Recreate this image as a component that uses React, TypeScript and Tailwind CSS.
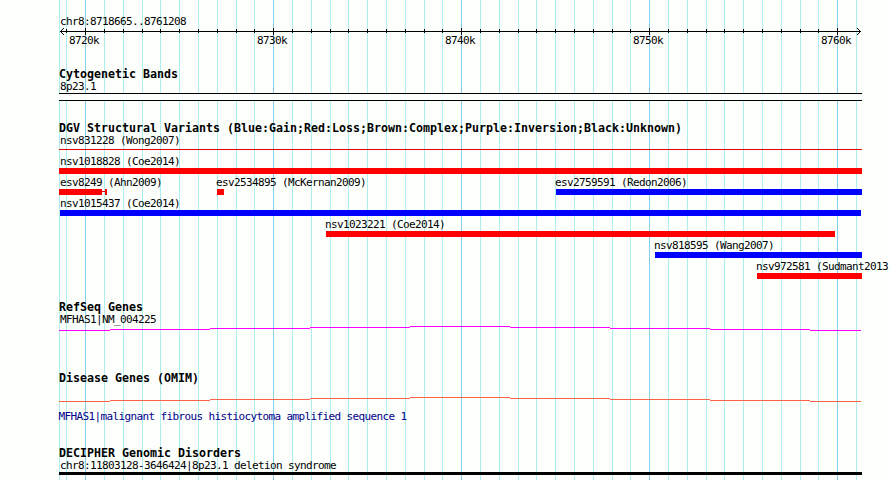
import clsx from "clsx";

const ORIGIN = 59;
const WIDTH = 803;

const MAJOR = [
	{ x: 85, label: "8720k" },
	{ x: 273, label: "8730k" },
	{ x: 461, label: "8740k" },
	{ x: 649, label: "8750k" },
	{ x: 837, label: "8760k" },
];
// 1k steps between two major lines, rounded to whole pixels
const STEPS = [19, 38, 57, 75, 94, 113, 132, 151, 169];
const MINOR = [
	66,
	...MAJOR.flatMap((m) => STEPS.map((s) => m.x + s)).filter((x) => x < 862),
];

type Feature = {
	name: string;
	label: number;
	start: number;
	end: number;
	color: string;
	thin?: boolean;
	tail?: boolean;
};

const VARIANTS: Feature[][] = [
	[{ name: "nsv831228 (Wong2007)", label: 60, start: 59, end: 862, color: "bg-[#e60000]", thin: true }],
	[{ name: "nsv1018828 (Coe2014)", label: 60, start: 59, end: 862, color: "bg-[#ff0000]" }],
	[
		{ name: "esv8249 (Ahn2009)", label: 60, start: 59, end: 102, color: "bg-[#ff0000]", tail: true },
		{ name: "esv2534895 (McKernan2009)", label: 216, start: 217, end: 224, color: "bg-[#ff0000]" },
		{ name: "esv2759591 (Redon2006)", label: 555, start: 556, end: 862, color: "bg-[#0000ff]" },
	],
	[{ name: "nsv1015437 (Coe2014)", label: 60, start: 60, end: 861, color: "bg-[#0000ff]" }],
	[{ name: "nsv1023221 (Coe2014)", label: 325, start: 326, end: 835, color: "bg-[#ff0000]" }],
	[{ name: "nsv818595 (Wang2007)", label: 654, start: 655, end: 862, color: "bg-[#0000ff]" }],
	[{ name: "nsv972581 (Sudmant2013", label: 756, start: 757, end: 862, color: "bg-[#ff0000]" }],
];

function Title({ children }: { children: string }) {
	return (
		<h2 className="h-3 text-[11.63px] leading-3 font-bold whitespace-pre">
			{children}
		</h2>
	);
}

function Label({ children, className }: { children: string; className?: string }) {
	return (
		<div
			className={clsx(
				"h-3 text-[11px] leading-[14px] tracking-[-0.622px] whitespace-pre",
				className,
			)}
		>
			{children}
		</div>
	);
}

function GridLines() {
	return (
		<svg
			className="absolute inset-0"
			width="890"
			height="480"
			shapeRendering="crispEdges"
		>
			{[ORIGIN, ...MINOR].map((x) => (
				<rect key={x} x={x} y="0" width="1" height="480" fill="#afeeee" />
			))}
			{MAJOR.map((m) => (
				<rect key={m.x} x={m.x} y="0" width="1" height="480" fill="#87ceeb" />
			))}
		</svg>
	);
}

function Ruler() {
	return (
		<div>
			<svg
				className="mt-px block"
				width={WIDTH}
				height="7"
				viewBox={`${ORIGIN} 0 ${WIDTH} 7`}
				shapeRendering="crispEdges"
			>
				<rect x="60" y="3" width="801" height="1" />
				{MINOR.filter((x) => x < 856).map((x) => (
					<rect key={x} x={x} y="1" width="1" height="4" />
				))}
				{MAJOR.map((m) => (
					<rect key={m.x} x={m.x} y="0" width="1" height="7" />
				))}
				{[1, 2, 3].map((d) => (
					<g key={d}>
						<rect x={60 + d} y={3 - d} width="1" height="1" />
						<rect x={60 + d} y={3 + d} width="1" height="1" />
						<rect x={860 - d} y={3 - d} width="1" height="1" />
						<rect x={860 - d} y={3 + d} width="1" height="1" />
					</g>
				))}
			</svg>
			<div className="-mt-px ml-[10px] flex gap-[158px]">
				{MAJOR.map((m) => (
					<Label key={m.x} className="w-[30px] shrink-0">
						{m.label}
					</Label>
				))}
			</div>
		</div>
	);
}

function VariantRow({ features }: { features: Feature[] }) {
	return (
		<div className="grid h-[21px] grid-cols-1">
			{features.map((f) => (
				<div key={f.name} className="col-start-1 row-start-1">
					<div style={{ marginLeft: f.label - ORIGIN }}>
						<Label>{f.name}</Label>
					</div>
					<div
						className="mt-px flex h-1.5 items-center"
						style={{ marginLeft: f.start - ORIGIN }}
					>
						<div
							className={clsx(f.color, f.thin ? "-mt-px h-px" : "h-1.5")}
							style={{ width: f.end - f.start }}
						/>
						{f.tail && (
							<>
								<div className="-mt-px h-px w-[3px] bg-[#e60000]" />
								<div className="h-1.5 w-0.5 bg-[#ff0000]" />
							</>
						)}
					</div>
				</div>
			))}
		</div>
	);
}

// The gene spans the whole view as a very flat arch
function GeneLine({ color, className }: { color: string; className: string }) {
	const levels = [4, 3, 2, 1, 0, 1, 2, 3, 4];
	return (
		<svg
			className={clsx("block", className)}
			width={WIDTH}
			height="5"
			viewBox={`${ORIGIN} 0 ${WIDTH} 5`}
			shapeRendering="crispEdges"
		>
			{levels.map((y, i) => {
				const x1 = i === 0 ? ORIGIN : 10 + i * 100;
				const x2 = i === 8 ? 861 : 110 + i * 100;
				return <rect key={i} x={x1} y={y} width={x2 - x1} height="1" fill={color} />;
			})}
		</svg>
	);
}

export default function App() {
	return (
		<div className="relative h-[480px] w-[890px] overflow-hidden bg-[#fdfffc] font-['DejaVu_Sans_Mono',monospace] text-black">
			<GridLines />
			<main className="relative ml-[59px] w-[803px] pt-[15px]">
				<Label className="ml-px">chr8:8718665..8761208</Label>
				<Ruler />

				<section className="mt-[22px]">
					<Title>Cytogenetic Bands</Title>
					<Label className="ml-px">8p23.1</Label>
					<div className="mt-px h-2 border-y border-black bg-[#fdfffc]" />
				</section>

				<section className="mt-[21px]">
					<Title>
						DGV Structural Variants (Blue:Gain;Red:Loss;Brown:Complex;Purple:Inversion;Black:Unknown)
					</Title>
					{VARIANTS.map((row) => (
						<VariantRow key={row[0].name} features={row} />
					))}
				</section>

				<section className="mt-5">
					<Title>RefSeq Genes</Title>
					<Label className="ml-px">MFHAS1|NM_004225</Label>
					<GeneLine color="#ff00ff" className="mt-px" />
				</section>

				<section className="mt-[41px]">
					<Title>Disease Genes (OMIM)</Title>
					<GeneLine color="#ff6347" className="mt-[13px]" />
					<Label className="mt-2 -ml-[0.5px] text-[#00008b]">
						MFHAS1|malignant fibrous histiocytoma amplified sequence 1
					</Label>
				</section>

				<section className="mt-[25px]">
					<Title>DECIPHER Genomic Disorders</Title>
					<Label className="ml-px">
						chr8:11803128-3646424|8p23.1 deletion syndrome
					</Label>
					<div className="mt-px h-[3px] bg-black" />
				</section>
			</main>
		</div>
	);
}
